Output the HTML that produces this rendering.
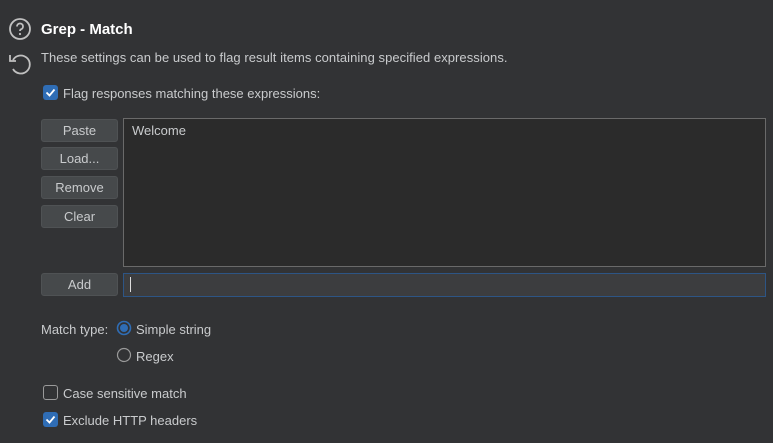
<!DOCTYPE html>
<html><head><style>
body{margin:0;width:773px;height:443px;background:#323335;font-family:"Liberation Sans",sans-serif;font-size:13px;color:#c9cbcd;position:relative;overflow:hidden}
.a{position:absolute}
.btn{position:absolute;left:41px;width:77px;height:23px;background:#46494b;border:1px solid #4f5254;border-radius:3px;box-sizing:border-box;text-align:center;line-height:22px;color:#c9cbcd}
.cb{position:absolute;width:15px;height:15px;border-radius:3px;box-sizing:border-box}
.on{background:#2f6db5}
.off{border:1px solid #9a9a9a}
</style></head><body>
<svg class="a" style="left:8px;top:17px" width="24" height="24" viewBox="0 0 24 24"><circle cx="12" cy="12" r="10" fill="none" stroke="#c0c0c0" stroke-width="1.8"/><path d="M9 9.5a3 3 0 1 1 4 2.8c-.8.4-1 .9-1 1.7" fill="none" stroke="#c0c0c0" stroke-width="1.8"/><circle cx="12" cy="17" r="1.1" fill="#c0c0c0"/></svg>
<svg class="a" style="left:7px;top:51px" width="26" height="26" viewBox="0 0 26 26"><path d="M6 9A9 9 0 1 1 6 18" fill="none" stroke="#c0c0c0" stroke-width="1.8"/><path d="M3 4v6h6" fill="none" stroke="#c0c0c0" stroke-width="1.8"/></svg>
<div class="a" style="left:41px;top:21px;font-weight:bold;font-size:15px;color:#fff">Grep - Match</div>
<div class="a" style="left:41px;top:50px;letter-spacing:0.05px">These settings can be used to flag result items containing specified expressions.</div>
<div class="cb on" style="left:43px;top:85px"></div>
<svg class="a" style="left:43px;top:85px" width="15" height="15"><path d="M3.5 7.5l3 3 5-6" fill="none" stroke="#fff" stroke-width="1.8"/></svg>
<div class="a" style="left:63px;top:86px">Flag responses matching these expressions:</div>
<div class="btn" style="top:119px">Paste</div>
<div class="btn" style="top:147px">Load...</div>
<div class="btn" style="top:176px">Remove</div>
<div class="btn" style="top:205px">Clear</div>
<div class="btn" style="top:273px">Add</div>
<div class="a" style="left:123px;top:118px;width:643px;height:149px;background:#2b2b2b;border:1px solid #6a6a6a;box-sizing:border-box"></div>
<div class="a" style="left:132px;top:123px">Welcome</div>
<div class="a" style="left:123px;top:273px;width:643px;height:24px;background:#3c3d3f;border:1px solid #2d5585;box-sizing:border-box"></div>
<div class="a" style="left:130px;top:277px;width:1px;height:15px;background:#ddd"></div>
<div class="a" style="left:41px;top:322px">Match type:</div>
<svg class="a" style="left:116px;top:320px" width="16" height="16"><circle cx="8" cy="8" r="6.5" fill="none" stroke="#2f6db5" stroke-width="1.6"/><circle cx="8" cy="8" r="4" fill="#2f6db5"/></svg>
<div class="a" style="left:136px;top:322px">Simple string</div>
<svg class="a" style="left:116px;top:347px" width="16" height="16"><circle cx="8" cy="8" r="6.5" fill="none" stroke="#9a9a9a" stroke-width="1.2"/></svg>
<div class="a" style="left:136px;top:349px">Regex</div>
<div class="cb off" style="left:43px;top:385px"></div>
<div class="a" style="left:63px;top:386px">Case sensitive match</div>
<div class="cb on" style="left:43px;top:412px"></div>
<svg class="a" style="left:43px;top:412px" width="15" height="15"><path d="M3.5 7.5l3 3 5-6" fill="none" stroke="#fff" stroke-width="1.8"/></svg>
<div class="a" style="left:63px;top:413px">Exclude HTTP headers</div>
</body></html>
